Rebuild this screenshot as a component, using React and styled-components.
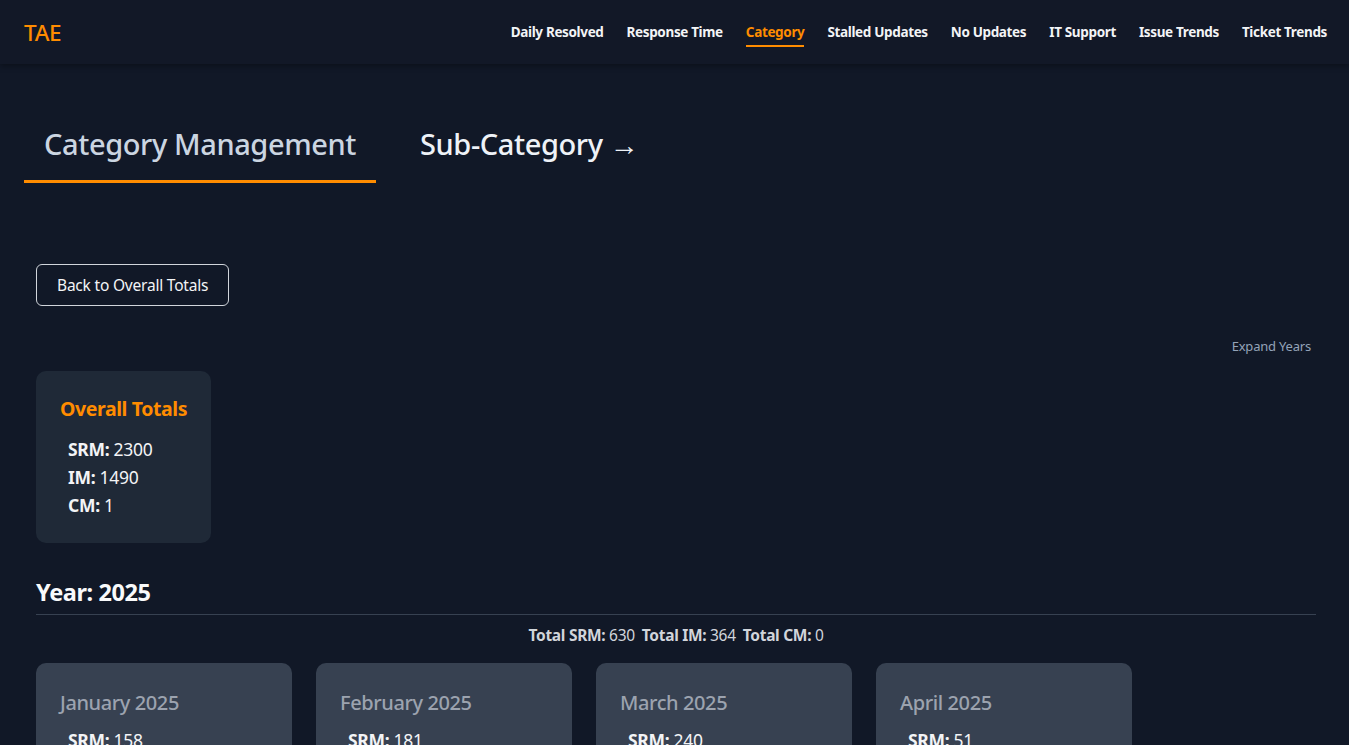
import React from "react";
import styled, { createGlobalStyle } from "styled-components";

const Global = createGlobalStyle`
  html, body { margin: 0; padding: 0; background: #111827; }
  body { font-family: "Noto Sans", "Open Sans", sans-serif; color: #f3f4f6; }
  * { box-sizing: border-box; }
`;

const Header = styled.header`
  height: 64px;
  display: flex;
  align-items: center;
  justify-content: space-between;
  padding: 0 22px 0 24px;
  background: #121827;
  box-shadow: 0 2px 6px rgba(0, 0, 0, 0.35);
`;

const Logo = styled.div`
  color: #ff8c00;
  font-size: 22.5px;
  font-weight: 500;
  letter-spacing: -0.4px;
`;

const Nav = styled.nav`
  display: flex;
  gap: 23px;
`;

const NavItem = styled.a`
  font-size: 13.5px;
  font-weight: 700;
  letter-spacing: -0.35px;
  color: ${(p) => (p.$active ? "#ff8c00" : "#f3f4f6")};
  padding: 3px 0 4px;
  border-bottom: 2px solid ${(p) => (p.$active ? "#ff8c00" : "transparent")};
  margin-top: 2px;
`;

const Main = styled.main`
  padding: 62px 24px 0 24px;
`;

const Tabs = styled.div`
  display: flex;
  align-items: flex-end;
  gap: 24px;
`;

const Tab = styled.div`
  padding: 0 20px ${(p) => (p.$active ? "18px" : "16px")};
  font-size: 29px;
  font-weight: 500;
  letter-spacing: -0.4px;
  color: ${(p) => (p.$active ? "#cbd5e1" : "#eef2f7")};
  border-bottom: 3px solid ${(p) => (p.$active ? "#ff8c00" : "transparent")};
  line-height: 36px;
  transform: ${(p) => (p.$active ? "none" : "translateY(-2px)")};
`;

const Content = styled.section`
  padding: 81px 9px 0 12px;
`;

const BackButton = styled.button`
  font-family: inherit;
  font-size: 15.5px;
  color: #f3f4f6;
  background: transparent;
  border: 1px solid #d1d5db;
  border-radius: 6px;
  height: 42px;
  padding: 0 20px;
  letter-spacing: -0.2px;
`;

const ExpandRow = styled.div`
  display: flex;
  justify-content: flex-end;
  padding: 31px 5px 0 0;
`;

const ExpandLink = styled.span`
  font-size: 13px;
  color: #94a3b8;
  letter-spacing: -0.2px;
`;

const TotalsCard = styled.div`
  margin-top: 16px;
  width: fit-content;
  min-width: 175px;
  background: #1f2937;
  border-radius: 10px;
  padding: 25px 24px 24px 24px;
`;

const TotalsTitle = styled.div`
  color: #ff8c00;
  font-size: 19.5px;
  font-weight: 700;
  letter-spacing: -0.4px;
  line-height: 26px;
  margin-bottom: 13px;
  white-space: nowrap;
`;

const StatLine = styled.div`
  padding-left: 8px;
  font-size: 17.5px;
  line-height: 28px;
  color: #f3f4f6;
  letter-spacing: -0.3px;
  b { font-weight: 700; }
`;

const YearHeading = styled.h2`
  margin: 34px 0 0 0;
  font-size: 23.5px;
  font-weight: 700;
  color: #f9fafb;
  letter-spacing: -0.4px;
  line-height: 30px;
  padding-bottom: 7px;
  border-bottom: 1px solid #374151;
`;

const YearTotals = styled.div`
  text-align: center;
  font-size: 15.5px;
  color: #d1d5db;
  letter-spacing: -0.3px;
  margin-top: 10px;
  line-height: 20px;
  b { font-weight: 700; }
  span + span { margin-left: 7px; }
`;

const MonthGrid = styled.div`
  display: flex;
  gap: 24px;
  margin-top: 18px;
`;

const MonthCard = styled.div`
  width: 256px;
  height: 200px;
  background: #374151;
  border-radius: 10px;
  padding: 27px 24px;
`;

const MonthTitle = styled.div`
  color: #9ca3af;
  font-size: 20px;
  font-weight: 500;
  letter-spacing: -0.4px;
  line-height: 26px;
  margin-bottom: 10px;
`;

const months = [
  { name: "January 2025", srm: 158 },
  { name: "February 2025", srm: 181 },
  { name: "March 2025", srm: 240 },
  { name: "April 2025", srm: 51 },
];

const navItems = [
  "Daily Resolved",
  "Response Time",
  "Category",
  "Stalled Updates",
  "No Updates",
  "IT Support",
  "Issue Trends",
  "Ticket Trends",
];

export default function App() {
  return (
    <>
      <Global />
      <Header>
        <Logo>TAE</Logo>
        <Nav>
          {navItems.map((n) => (
            <NavItem key={n} $active={n === "Category"}>
              {n}
            </NavItem>
          ))}
        </Nav>
      </Header>
      <Main>
        <Tabs>
          <Tab $active>Category Management</Tab>
          <Tab>Sub-Category →</Tab>
        </Tabs>
        <Content>
          <BackButton>Back to Overall Totals</BackButton>
          <ExpandRow>
            <ExpandLink>Expand Years</ExpandLink>
          </ExpandRow>
          <TotalsCard>
            <TotalsTitle>Overall Totals</TotalsTitle>
            <StatLine><b>SRM:</b> 2300</StatLine>
            <StatLine><b>IM:</b> 1490</StatLine>
            <StatLine><b>CM:</b> 1</StatLine>
          </TotalsCard>
          <YearHeading>Year: 2025</YearHeading>
          <YearTotals>
            <span><b>Total SRM:</b> 630</span>
            <span><b>Total IM:</b> 364</span>
            <span><b>Total CM:</b> 0</span>
          </YearTotals>
          <MonthGrid>
            {months.map((m) => (
              <MonthCard key={m.name}>
                <MonthTitle>{m.name}</MonthTitle>
                <StatLine><b>SRM:</b> {m.srm}</StatLine>
              </MonthCard>
            ))}
          </MonthGrid>
        </Content>
      </Main>
    </>
  );
}
